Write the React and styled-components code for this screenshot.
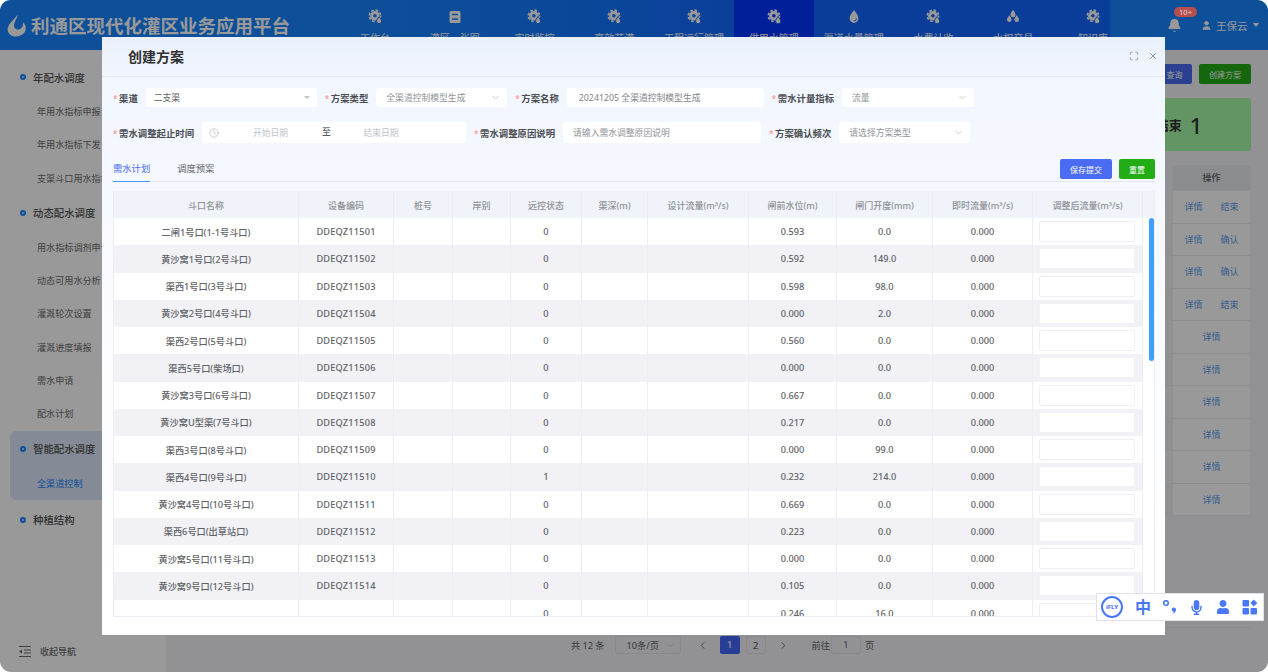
import React from 'react';
import styled, { createGlobalStyle } from 'styled-components';
import { ChevronDown, ChevronLeft, ChevronRight, Clock, Maximize, X, Bell, User } from 'lucide-react';
import { FaMicrophone, FaUser } from 'react-icons/fa';

const GlobalStyle = createGlobalStyle`
  html, body {
    margin: 0;
    padding: 0;
    background: #fff;
    overflow: hidden;
  }
  * {
    box-sizing: border-box;
  }
  body, input {
    font-family: "Noto Sans", "Noto Sans CJK SC", sans-serif;
  }
`;

const Page = styled.div`
  position: relative;
  width: 1268px;
  height: 672px;
  border-radius: 11px;
  overflow: hidden;
  display: flex;
  flex-direction: column;
  background: #fff;
`;

/* header */
const Header = styled.header`
  flex: 0 0 50px;
  display: flex;
  align-items: flex-start;
  background: linear-gradient(90deg, #1684ff 0, #1684ff 28%, #1275ff 48%, #1267ff 62%, #1267ff 87.5%, #1684ff 87.6%);
  color: #fff;
`;

const Logo = styled.div`
  flex: 0 0 335px;
  display: flex;
  align-items: center;
  gap: 4px;
  height: 50px;
  padding: 0 0 0 7px;
  font-size: 18.5px;
  font-weight: 700;
  white-space: nowrap;
`;

const Nav = styled.nav`
  display: flex;
  flex: 0 0 798px;
`;

const NavItem = styled.div`
  flex: 0 0 79.8px;
  height: 50px;
  padding-top: 9px;
  display: flex;
  flex-direction: column;
  align-items: center;
  gap: 7px;
  font-size: 10px;
  line-height: 13px;
  white-space: nowrap;
  background: ${(p) => (p.$active ? '#0035ff' : 'transparent')};
`;

const UserBox = styled.div`
  flex: 1;
  display: flex;
  align-items: center;
  height: 50px;
  padding-left: 34px;
  font-size: 10.5px;
`;

const BellWrap = styled.div`
  position: relative;
  width: 22px;
  height: 16px;
  margin-right: 12px;
  margin-top: 1px;
`;

const Badge = styled.span`
  position: absolute;
  z-index: 1;
  left: 7px;
  top: -11px;
  width: 23px;
  height: 10px;
  border-radius: 5px;
  background: #b84e4e;
  color: #d8d8d8;
  font-size: 7.5px;
  line-height: 10px;
  text-align: center;
`;

const UserName = styled.span`
  margin-left: 4px;
`;

const Caret = styled.span`
  width: 0;
  height: 0;
  margin-left: 5px;
  border-left: 3.5px solid transparent;
  border-right: 3.5px solid transparent;
  border-top: 4px solid #fff;
`;

/* page under the dialog */
const Body = styled.div`
  flex: 1;
  display: flex;
  min-height: 0;
`;

const Sidebar = styled.aside`
  flex: 0 0 166px;
  display: flex;
  flex-direction: column;
  padding-top: 9px;
  background: #fff;
  color: #6c6c6c;
`;

const Section = styled.div`
  margin: 0 0 ${(p) => (p.$active ? 2 : 0)}px 10px;
  border-radius: 6px 0 0 6px;
  background: ${(p) => (p.$active ? '#dce8fa' : 'transparent')};
`;

const GroupTitle = styled.div`
  height: 36px;
  display: flex;
  align-items: center;
  gap: 7px;
  padding-left: 10px;
  font-size: 10.4px;
  font-weight: 500;
  color: #555;
`;

const Dot = styled.i`
  width: 6px;
  height: 6px;
  border-radius: 50%;
  border: 2px solid #1684ff;
  background: #dce8fa;
`;

const SubItem = styled.div`
  height: 33.3px;
  line-height: 33.3px;
  padding-left: 27px;
  font-size: 9.1px;
  white-space: nowrap;
  color: ${(p) => (p.$active ? '#1684ff' : 'inherit')};
`;

const Collapse = styled.div`
  margin-top: auto;
  height: 42px;
  display: flex;
  align-items: center;
  gap: 9px;
  padding-left: 19px;
  font-size: 9px;
  font-weight: 500;
`;

const Main = styled.main`
  flex: 1;
  min-width: 0;
  display: flex;
  flex-direction: column;
  padding: 14px 17px 0 10px;
  background: #f3f4f8;
`;

const Toolbar = styled.div`
  display: flex;
  justify-content: flex-end;
  gap: 7px;
  height: 20px;
`;

const Button = styled.button`
  height: 20px;
  width: ${(p) => p.$w}px;
  padding: 0;
  border: 0;
  border-radius: 2px;
  color: #fff;
  font-family: inherit;
  font-size: 8px;
  background: ${(p) => (p.$green ? '#22ac16' : '#4a6cf2')};
`;

const Stats = styled.div`
  display: grid;
  grid-template-columns: repeat(3, 1fr) 144px;
  gap: 12px;
  height: 53px;
  margin: 14px 0;
`;

const Stat = styled.div`
  display: flex;
  align-items: center;
  justify-content: center;
  gap: 8px;
  border-radius: 2px;
  background: ${(p) => p.$bg};
  color: #333;
  font-size: 13px;
  font-weight: 700;
  b {
    font-size: 22px;
    font-weight: 500;
  }
`;

const ListBox = styled.div`
  height: 463px;
  border-bottom: 1px solid #e8e8ec;
  font-size: 9px;
`;

const ListRow = styled.div`
  display: grid;
  grid-template-columns: 1fr 79px;
  height: ${(p) => (p.$head ? 26 : 32.5)}px;
  border-bottom: 1px solid #ebeef5;
  background: ${(p) => (p.$stripe ? '#f0f0f2' : 'transparent')};
`;

const OpCell = styled.div`
  display: flex;
  align-items: center;
  justify-content: center;
  gap: 18px;
  border-left: 1px solid #ebeef5;
  border-right: 1px solid #ebeef5;
  background: ${(p) => (p.$head ? '#e8eaed' : '#fff')};
  color: ${(p) => (p.$head ? '#606266' : '#5b9dee')};
  font-weight: ${(p) => (p.$head ? 500 : 400)};
`;

const Pager = styled.div`
  display: flex;
  align-items: center;
  justify-content: center;
  height: 18px;
  margin-top: 8px;
  padding-left: 18px;
  font-size: 9.2px;
  color: #606266;
`;

const PageSize = styled.div`
  width: 66px;
  height: 18px;
  margin: 0 16px 0 10px;
  padding: 0 5px 0 11px;
  display: flex;
  align-items: center;
  justify-content: space-between;
  border: 1px solid #e4e4e8;
  border-radius: 2px;
`;

const PageNo = styled.div`
  width: 20px;
  height: 18px;
  margin-left: ${(p) => p.$gap || 0}px;
  border-radius: 2px;
  text-align: center;
  line-height: 18px;
  font-weight: 500;
  color: ${(p) => (p.$on ? '#fff' : '#606266')};
  background: ${(p) => (p.$on ? '#4468fa' : 'transparent')};
  border: ${(p) => (p.$on ? '0' : '1px solid #e4e4e8')};
`;

const NextIcon = styled(ChevronRight)`
  margin-left: 12px;
`;

const JumpLabel = styled.span`
  margin-left: 23px;
`;

const JumpBox = styled.div`
  width: 30px;
  height: 18px;
  margin: 0 4px 0 1px;
  border: 1px solid #e4e4e8;
  border-radius: 2px;
  text-align: center;
  line-height: 16px;
`;

const Mask = styled.div`
  position: absolute;
  inset: 0;
  background: rgba(0, 0, 0, 0.4);
`;

/* dialog */
const Modal = styled.section`
  position: absolute;
  z-index: 2;
  left: 102px;
  top: 37px;
  width: 1063px;
  height: 598px;
  display: flex;
  flex-direction: column;
  background: linear-gradient(180deg, #e9f0fb 0, #f2f6fe 40px, #f5f8ff 150px, #fbfcff 300px, #fff 100%);
`;

const ModalHead = styled.div`
  flex: 0 0 40px;
  display: flex;
  align-items: center;
  padding: 0 7px 1px 26px;
  border-bottom: 1px solid #e3e8f1;
  color: #555;
`;

const ModalTitle = styled.h2`
  flex: 1;
  margin: 0;
  font-size: 14px;
  font-weight: 700;
  color: #303133;
`;

const HeadTool = styled.span`
  display: flex;
  margin-left: 9px;
`;

const Form = styled.div`
  display: flex;
  flex-direction: column;
  gap: 15px;
  padding: 11px 11px 0;
`;

const FormRow = styled.div`
  display: flex;
  gap: 8px;
  height: ${(p) => p.$h}px;
`;

const FormItem = styled.div`
  display: flex;
  align-items: center;
  gap: 8px;
`;

const Label = styled.label`
  font-size: 9.4px;
  font-weight: 700;
  color: #4a4d52;
  white-space: nowrap;
  &::before {
    content: '*';
    display: inline-block;
    width: 6px;
    color: #f58a8a;
    font-size: 8px;
    font-weight: 400;
  }
`;

const Control = styled.div`
  width: ${(p) => p.$w}px;
  height: 100%;
  display: flex;
  align-items: center;
  justify-content: space-between;
  padding: 0 6px 0 ${(p) => p.$pad || 10}px;
  background: #fff;
  border-radius: 3px;
  font-size: 8.8px;
  color: ${(p) => p.$color || '#909399'};
`;

const TextField = styled.input`
  width: ${(p) => p.$w}px;
  height: 100%;
  padding: 0 6px 0 ${(p) => p.$pad}px;
  border: 0;
  border-radius: 3px;
  outline: 0;
  background: #fff;
  font-size: 8.8px;
  color: #7f8389;
  &::placeholder {
    color: #909399;
  }
`;

const FilledCaret = styled.span`
  width: 0;
  height: 0;
  margin-right: 1px;
  border-left: 3px solid transparent;
  border-right: 3px solid transparent;
  border-top: 3.5px solid #c0c4cc;
`;

const DateBox = styled.div`
  width: 264px;
  height: 100%;
  display: flex;
  align-items: center;
  padding-left: 7px;
  background: #fff;
  border-radius: 3px;
  font-size: 8.8px;
  color: #c0c4cc;
`;

const DatePart = styled.span`
  flex: 0 0 ${(p) => p.$w}px;
  text-align: center;
`;

const DateSep = styled.span`
  flex: 0 0 9px;
  color: #303133;
  margin-top: -2px;
`;

const TabBar = styled.div`
  display: flex;
  align-items: flex-end;
  justify-content: space-between;
  height: 23px;
  margin: 16px 10px 0 11px;
  border-bottom: 1px solid #e4e7ed;
`;

const Tabs = styled.div`
  display: flex;
  gap: 27px;
`;

const Tab = styled.div`
  height: 21px;
  margin-bottom: -1px;
  font-size: 9.3px;
  line-height: 16px;
  color: ${(p) => (p.$on ? '#4a6cf2' : '#606266')};
  border-bottom: 1px solid ${(p) => (p.$on ? '#409eff' : 'transparent')};
`;

const TabTools = styled.div`
  display: flex;
  gap: 7px;
  align-self: flex-start;
`;

const TableWrap = styled.div`
  position: relative;
  height: 426px;
  margin: 9px 10px 0 11px;
  overflow: hidden;
  border-bottom: 1px solid #ebeef5;
  border-right: 1px solid #ebeef5;
`;

const Table = styled.table`
  width: 1042px;
  table-layout: fixed;
  border-collapse: separate;
  border-spacing: 0;
  font-size: 9.2px;
  color: #5f6266;
`;

const Th = styled.th`
  height: 27px;
  padding: 2px 0 0;
  font-size: 9px;
  font-weight: 500;
  color: #8e9196;
  background: #f0f3f9;
  border-left: 1px solid #e9edf5;
  white-space: nowrap;
`;

const Td = styled.td`
  height: 27.25px;
  padding: 0;
  text-align: center;
  font-weight: 500;
  white-space: nowrap;
  border-left: 1px solid #eceef5;
  background: ${(p) => (p.$stripe ? '#f1f1f6' : '#fff')};
`;

const CodeTd = styled(Td)`
  letter-spacing: 0.2px;
`;

const GutterTd = styled.td`
  background: #fff;
  border-left: 1px solid #eceef5;
`;

const FlowInput = styled.input`
  display: block;
  width: 96px;
  height: 21px;
  margin-left: 6px;
  border: 1px solid ${(p) => (p.$stripe ? 'transparent' : '#eeeff4')};
  border-radius: 2px;
  outline: 0;
  background: #fff padding-box;
`;

const ScrollThumb = styled.div`
  position: absolute;
  right: 0;
  top: 27px;
  width: 5px;
  height: 143px;
  border-radius: 3px;
  background: #409eff;
`;

/* input method bar */
const ImeBar = styled.div`
  position: absolute;
  z-index: 3;
  left: 1096px;
  top: 593px;
  width: 168px;
  height: 28px;
  display: flex;
  align-items: center;
  justify-content: space-between;
  padding: 0 5px 0 4px;
  background: #fff;
  border: 1px solid #dfe2ea;
  color: #4a78f5;
`;

const ImeLogo = styled.div`
  width: 22px;
  height: 22px;
  border: 2px solid #4a78f5;
  border-radius: 50%;
  font-size: 6px;
  font-weight: 800;
  line-height: 18px;
  text-align: center;
`;

const ImeZh = styled.span`
  font-size: 16px;
  font-weight: 700;
  line-height: 20px;
`;

const GearIcon = () => (
  <svg width="16" height="16" viewBox="0 0 16 16" fill="none" stroke="currentColor">
    <circle cx="7.9" cy="6.8" r="3.3" strokeWidth="3" />
    <circle cx="7.9" cy="6.8" r="5.6" strokeWidth="1.8" strokeDasharray="2.6 1.8" />
    <path d="M12.1 7.6c1.4 1.8 2.6 3.1 2.6 4.6a2.6 2.6 0 0 1-5.2 0c0-1.5 1.2-2.8 2.6-4.6z" fill="currentColor" stroke="#1267ff" strokeWidth="1" />
  </svg>
);

const BoardIcon = () => (
  <svg width="16" height="16" viewBox="0 0 16 16">
    <rect x="2.5" y="2" width="11" height="12" rx="1.5" fill="currentColor" />
    <rect x="5" y="4.8" width="6" height="1.4" fill="#1684ff" />
    <rect x="5" y="9.4" width="6" height="1.4" fill="#1684ff" />
  </svg>
);

const DropIcon = () => (
  <svg width="16" height="16" viewBox="0 0 16 16">
    <path d="M8 1c2.3 3 4.4 5.3 4.4 8.5a4.4 4.4 0 0 1-8.8 0C3.6 6.3 5.7 4 8 1z" fill="currentColor" />
    <path d="M10.5 9.500a2.5 2.5 0 0 1-2.5 2.5" fill="none" stroke="#1267ff" strokeWidth="0.9" />
  </svg>
);

const DropsIcon = () => (
  <svg width="16" height="16" viewBox="0 0 16 16" fill="currentColor">
    <path d="M8 .8c1.3 1.8 2.500 3.100 2.500 4.900a2.500 2.500 0 0 1-5 0C5.500 3.900 6.700 2.600 8 .8z" />
    <path d="M4.300 6.300c1.200 1.700 2.300 2.900 2.300 4.500a2.300 2.300 0 0 1-4.600 0c0-1.600 1.100-2.800 2.300-4.500z" />
    <path d="M11.700 6.300c1.200 1.700 2.300 2.900 2.300 4.500a2.300 2.300 0 0 1-4.600 0c0-1.600 1.100-2.800 2.300-4.500z" />
  </svg>
);

const LogoMark = () => (
  <svg width="20" height="23" viewBox="0 0 20 22">
    <path d="M11 0C8 4 2 8.500 .8 13.500c-1 4.500 3 8.500 8.200 8.500 5.500 0 9.800-3.600 9.800-8.200 0-2.200-1-4.300-2.800-6.200.6 3-.6 6.200-3.600 7.200C9.600 15.600 7 14 7 11.300 7 7.500 10 4 11 0z" fill="#fff" />
  </svg>
);

const CollapseIcon = () => (
  <svg width="12" height="11" viewBox="0 0 12 11" stroke="currentColor" strokeWidth="1" fill="currentColor">
    <path d="M0 .5h12M5 4h7M5 7h7M0 10.500h12" fill="none" />
    <path d="M3 3.500v4L0 5.500z" stroke="none" />
  </svg>
);

const PunctIcon = () => (
  <svg width="14" height="15" viewBox="0 0 14 15" fill="none" stroke="currentColor">
    <circle cx="3" cy="3" r="2.300" strokeWidth="1.600" />
    <path d="M10.500 7.500c1.700 0 2.700 1 2.500 2.500-.2 1.700-1.400 3.200-3.400 4.200.8-1 1.100-1.800 1.100-2.600-1.300-.1-2-.9-2-2 0-1.100.8-2.100 1.800-2.100z" fill="currentColor" stroke="none" />
  </svg>
);

const AppsIcon = () => (
  <svg width="16" height="16" viewBox="0 0 16 16" fill="currentColor">
    <rect x="0.500" y="1" width="6.500" height="6.500" rx="1" />
    <rect x="0.500" y="9" width="6.500" height="6.500" rx="1" />
    <rect x="8.500" y="9" width="6.500" height="6.500" rx="1" />
    <path d="M11.800.6l3.500 3.500-3.500 3.500-3.500-3.500z" />
  </svg>
);

const navItems = [
  { label: '工作台', Icon: GearIcon },
  { label: '灌区一张图', Icon: BoardIcon },
  { label: '实时监控', Icon: GearIcon },
  { label: '高效节灌', Icon: GearIcon },
  { label: '工程运行管理', Icon: GearIcon },
  { label: '供用水管理', Icon: GearIcon, active: true },
  { label: '渠道水量管理', Icon: DropIcon },
  { label: '水费计收', Icon: GearIcon },
  { label: '水权交易', Icon: DropsIcon },
  { label: '知识库', Icon: GearIcon },
];

const columns = [
  ['斗口名称', 185], ['设备编码', 95], ['桩号', 59], ['岸别', 58], ['远控状态', 71], ['渠深(m)', 66],
  ['设计流量(m³/s)', 101], ['闸前水位(m)', 88], ['闸门开度(mm)', 96], ['即时流量(m³/s)', 100], ['调整后流量(m³/s)', 110],
];

const rows = [
  ['二闸1号口(1-1号斗口)', 'DDEQZ11501', '0', '0.593', '0.0'],
  ['黄沙窝1号口(2号斗口)', 'DDEQZ11502', '0', '0.592', '149.0'],
  ['渠西1号口(3号斗口)', 'DDEQZ11503', '0', '0.598', '98.0'],
  ['黄沙窝2号口(4号斗口)', 'DDEQZ11504', '0', '0.000', '2.0'],
  ['渠西2号口(5号斗口)', 'DDEQZ11505', '0', '0.560', '0.0'],
  ['渠西5号口(柴场口)', 'DDEQZ11506', '0', '0.000', '0.0'],
  ['黄沙窝3号口(6号斗口)', 'DDEQZ11507', '0', '0.667', '0.0'],
  ['黄沙窝U型渠(7号斗口)', 'DDEQZ11508', '0', '0.217', '0.0'],
  ['渠西3号口(8号斗口)', 'DDEQZ11509', '0', '0.000', '99.0'],
  ['渠西4号口(9号斗口)', 'DDEQZ11510', '1', '0.232', '214.0'],
  ['黄沙窝4号口(10号斗口)', 'DDEQZ11511', '0', '0.669', '0.0'],
  ['渠西6号口(出草站口)', 'DDEQZ11512', '0', '0.223', '0.0'],
  ['黄沙窝5号口(11号斗口)', 'DDEQZ11513', '0', '0.000', '0.0'],
  ['黄沙窝9号口(12号斗口)', 'DDEQZ11514', '0', '0.105', '0.0'],
  ['', '', '0', '0.246', '16.0'],
];

const sideGroups = [
  { title: '年配水调度', items: ['年用水指标申报', '年用水指标下发', '支渠斗口用水指标'] },
  { title: '动态配水调度', items: ['用水指标调剂申请', '动态可用水分析', '灌溉轮次设置', '灌溉进度填报', '需水申请', '配水计划'] },
  { title: '智能配水调度', items: ['全渠道控制'], active: true },
  { title: '种植结构', items: [] },
];

const listOps = [['详情', '结束'], ['详情', '确认'], ['详情', '确认'], ['详情', '结束'], ['详情'], ['详情'], ['详情'], ['详情'], ['详情'], ['详情']];

const App = () => {
  return (
    <Page>
      <GlobalStyle />
      <Header>
        <Logo>
          <LogoMark />
          利通区现代化灌区业务应用平台
        </Logo>
        <Nav>
          {navItems.map(({ label, Icon, active }) => (
            <NavItem key={label} $active={active}>
              <Icon />
              {label}
            </NavItem>
          ))}
        </Nav>
        <UserBox>
          <BellWrap>
            <Bell size={15} fill="#fff" strokeWidth={1.5} />
            <Badge>10+</Badge>
          </BellWrap>
          <User size={11} fill="#fff" strokeWidth={2} />
          <UserName>王保云</UserName>
          <Caret />
        </UserBox>
      </Header>

      <Body>
        <Sidebar>
          {sideGroups.map((g) => (
            <Section key={g.title} $active={g.active}>
              <GroupTitle>
                <Dot />
                {g.title}
              </GroupTitle>
              {g.items.map((item) => (
                <SubItem key={item} $active={g.active}>{item}</SubItem>
              ))}
            </Section>
          ))}
          <Collapse>
            <CollapseIcon />
            收起导航
          </Collapse>
        </Sidebar>

        <Main>
          <Toolbar>
            <Button $w={35}>查询</Button>
            <Button $w={52} $green>创建方案</Button>
          </Toolbar>
          <Stats>
            <Stat $bg="#cfe2ff" />
            <Stat $bg="#ffe3b3" />
            <Stat $bg="#cfe2ff" />
            <Stat $bg="#a6f7a6">结束 <b>1</b></Stat>
          </Stats>
          <ListBox>
            <ListRow $head>
              <div />
              <OpCell $head>操作</OpCell>
            </ListRow>
            {listOps.map((ops, i) => (
              <ListRow key={i} $stripe={i % 2 === 1}>
                <div />
                <OpCell>
                  {ops.map((op) => <span key={op}>{op}</span>)}
                </OpCell>
              </ListRow>
            ))}
          </ListBox>
          <Pager>
            共 12 条
            <PageSize>10条/页 <ChevronDown size={9} color="#c0c4cc" /></PageSize>
            <ChevronLeft size={11} />
            <PageNo $on $gap={12}>1</PageNo>
            <PageNo $gap={6}>2</PageNo>
            <NextIcon size={11} />
            <JumpLabel>前往</JumpLabel>
            <JumpBox>1</JumpBox>
            页
          </Pager>
        </Main>
      </Body>

      <Mask />

      <Modal>
        <ModalHead>
          <ModalTitle>创建方案</ModalTitle>
          <HeadTool><Maximize size={10} strokeWidth={1.2} /></HeadTool>
          <HeadTool><X size={10} strokeWidth={1.4} /></HeadTool>
        </ModalHead>
        <Form>
          <FormRow $h={19}>
            <FormItem>
              <Label>渠道</Label>
              <Control $w={171} $pad={8} $color="#606266">二支渠<FilledCaret /></Control>
            </FormItem>
            <FormItem>
              <Label>方案类型</Label>
              <Control $w={131}>全渠道控制模型生成<ChevronDown size={11} color="#c0c4cc" /></Control>
            </FormItem>
            <FormItem>
              <Label>方案名称</Label>
              <TextField $w={197} $pad={12} defaultValue="20241205 全渠道控制模型生成" />
            </FormItem>
            <FormItem>
              <Label>需水计量指标</Label>
              <Control $w={132}>流量<ChevronDown size={11} color="#c0c4cc" /></Control>
            </FormItem>
          </FormRow>
          <FormRow $h={21}>
            <FormItem>
              <Label>需水调整起止时间</Label>
              <DateBox>
                <Clock size={10} />
                <DatePart $w={103}>开始日期</DatePart>
                <DateSep>至</DateSep>
                <DatePart $w={100}>结束日期</DatePart>
              </DateBox>
            </FormItem>
            <FormItem>
              <Label>需水调整原因说明</Label>
              <TextField $w={198} $pad={10} placeholder="请输入需水调整原因说明" />
            </FormItem>
            <FormItem>
              <Label>方案确认频次</Label>
              <Control $w={131}>请选择方案类型<ChevronDown size={11} color="#c0c4cc" /></Control>
            </FormItem>
          </FormRow>
        </Form>

        <TabBar>
          <Tabs>
            <Tab $on>需水计划</Tab>
            <Tab>调度预案</Tab>
          </Tabs>
          <TabTools>
            <Button $w={52}>保存提交</Button>
            <Button $w={36} $green>重置</Button>
          </TabTools>
        </TabBar>

        <TableWrap>
          <Table>
            <colgroup>
              {columns.map(([name, w]) => <col key={name} width={w} />)}
              <col width={13} />
            </colgroup>
            <thead>
              <tr>
                {columns.map(([name]) => <Th key={name}>{name}</Th>)}
                <Th />
              </tr>
            </thead>
            <tbody>
              {rows.map((r, i) => {
                const stripe = i % 2 === 1;
                return (
                  <tr key={i}>
                    <Td $stripe={stripe}>{r[0]}</Td>
                    <CodeTd $stripe={stripe}>{r[1]}</CodeTd>
                    <Td $stripe={stripe} />
                    <Td $stripe={stripe} />
                    <Td $stripe={stripe}>{r[2]}</Td>
                    <Td $stripe={stripe} />
                    <Td $stripe={stripe} />
                    <Td $stripe={stripe}>{r[3]}</Td>
                    <Td $stripe={stripe}>{r[4]}</Td>
                    <Td $stripe={stripe}>0.000</Td>
                    <Td $stripe={stripe}><FlowInput $stripe={stripe} /></Td>
                    <GutterTd />
                  </tr>
                );
              })}
            </tbody>
          </Table>
          <ScrollThumb />
        </TableWrap>
      </Modal>

      <ImeBar>
        <ImeLogo>iFLY</ImeLogo>
        <ImeZh>中</ImeZh>
        <PunctIcon />
        <FaMicrophone size={15} />
        <FaUser size={14} />
        <AppsIcon />
      </ImeBar>
    </Page>
  );
};

export default App;
